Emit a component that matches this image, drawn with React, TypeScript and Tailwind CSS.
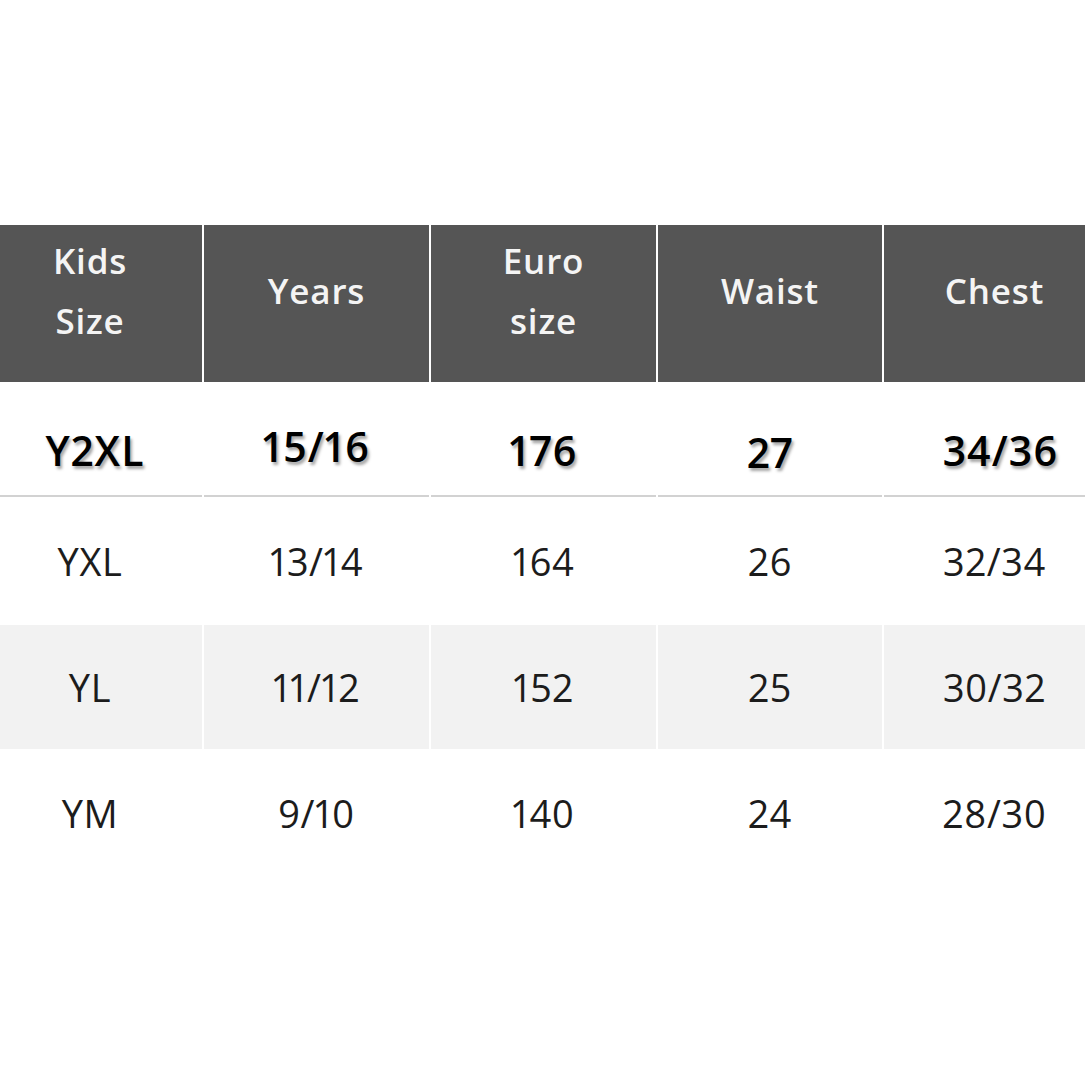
const headers = [['Kids', 'Size'], ['Years'], ['Euro', 'size'], ['Waist'], ['Chest']];

const rows = [
  { cells: ['YXL', '13/14', '164', '26', '32/34'], shaded: false },
  { cells: ['YL', '11/12', '152', '25', '30/32'], shaded: true },
  { cells: ['YM', '9/10', '140', '24', '28/30'], shaded: false },
];

const featured = ['Y2XL', '15/16', '176', '27', '34/36'];

// the columns are not quite centred in the picture
const colShift = ['pr-[22px]', 'pr-0', 'pr-0', 'pr-0', 'pl-[20px]'];
const featuredShift = ['pr-[12px] pt-6', 'pb-0 pt-4', 'pt-6', 'pt-7', 'pl-[32px] pt-6'];

export default function App() {
  return (
    <div className="w-[1085px] h-[1085px] bg-white pt-[225px] font-['Open_Sans',sans-serif]">
      <div className="grid grid-cols-[202px_225px_225px_224px_201px] gap-x-[2px]">
        {headers.map((h, i) => (
          <div
            key={i}
            className={`h-[157px] bg-[#555555] flex flex-col items-center justify-center pb-[26px] text-[#f4f4f4] text-[35px] font-semibold leading-[60px] tracking-[0.8px] ${colShift[i]}`}
          >
            {h.map((line) => (
              <span key={line}>{line}</span>
            ))}
          </div>
        ))}

        {featured.map((c, i) => (
          <div
            key={c}
            className={`h-[115px] border-b-2 border-[#d2d2d2] flex items-center justify-center ${featuredShift[i]}`}
          >
            <span className="text-[41px] font-semibold text-black tracking-[1px] proportional-nums [text-shadow:2px_3px_3px_rgba(0,0,0,0.35)]">
              {c}
            </span>
          </div>
        ))}

        {rows.map((r, ri) =>
          r.cells.map((c, i) => (
            <div
              key={`${ri}-${i}`}
              className={`flex items-center justify-center text-[38px] text-[#1c1c1c] tracking-[0.6px] proportional-nums ${colShift[i]} ${
                r.shaded ? 'bg-[#f2f2f2] h-[124px]' : 'h-[128px]'
              }`}
            >
              {c}
            </div>
          ))
        )}
      </div>
    </div>
  );
}
